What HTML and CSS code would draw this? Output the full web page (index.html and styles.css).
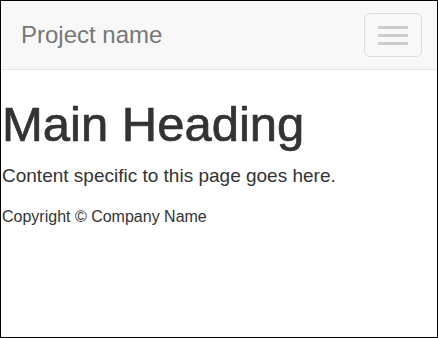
FILE: index.html
```html
<!DOCTYPE html>
<html>
<head>
<meta charset="utf-8">
<link rel="stylesheet" href="styles.css">
</head>
<body>
<div class="page">
  <nav class="navbar">
    <span class="brand">Project name</span>
    <button class="toggle" type="button" aria-label="Toggle navigation">
      <span class="bar"></span>
      <span class="bar"></span>
      <span class="bar"></span>
    </button>
  </nav>
  <main class="content">
    <h1 class="heading">Main Heading</h1>
    <p class="lead">Content specific to this page goes here.</p>
    <footer class="footer">Copyright © Company Name</footer>
  </main>
</div>
</body>
</html>
```

FILE: styles.css
```css
html, body {
  margin: 0;
  padding: 0;
}
body {
  font-family: "Liberation Sans", Arial, sans-serif;
  color: #333;
  background: #fff;
}
.page {
  box-sizing: border-box;
  width: 438px;
  height: 338px;
  border: 1px solid #000;
  overflow: hidden;
}
.navbar {
  display: flex;
  align-items: center;
  justify-content: space-between;
  height: 68px;
  padding: 0 15px 0 20px;
  background: #f8f8f8;
  border-bottom: 1px solid #e7e7e7;
}
.brand {
  font-size: 24px;
  line-height: 68px;
  color: #777;
}
.toggle {
  box-sizing: border-box;
  width: 58px;
  height: 44px;
  margin: 0;
  padding: 0;
  background: transparent;
  border: 1px solid #ddd;
  border-radius: 6px;
  display: flex;
  flex-direction: column;
  align-items: center;
  justify-content: center;
  gap: 5px;
}
.bar {
  display: block;
  width: 30px;
  height: 3px;
  background: #ccc;
  border-radius: 1px;
}
.content {
  padding: 0 1px;
}
.heading {
  margin: 27px 0 0;
  font-size: 49px;
  line-height: 54px;
  font-weight: normal;
  color: #333;
  -webkit-text-stroke: 0.7px #333;
}
.lead {
  margin: 11px 0 0;
  font-size: 19px;
  line-height: 27px;
}
.footer {
  margin-top: 16px;
  font-size: 16px;
  line-height: 23px;
}
```
